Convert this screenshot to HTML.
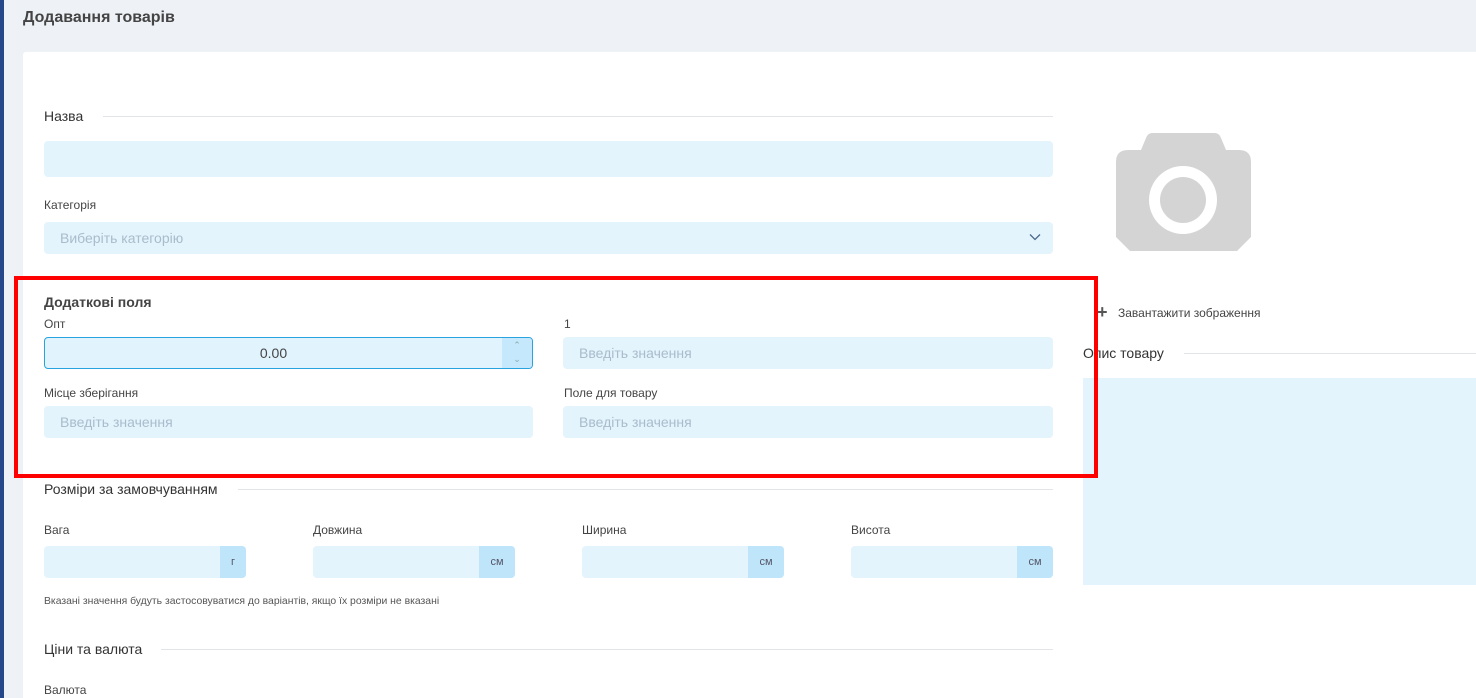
<!DOCTYPE html>
<html><head><meta charset="utf-8"><style>
*{box-sizing:border-box;margin:0;padding:0}
body{width:1476px;height:698px;overflow:hidden;background:#eef2f6;font-family:"Liberation Sans",sans-serif;position:relative;color:#333}
.a{position:absolute}
.lbl{font-size:12px;color:#444}
.inp{background:#e4f4fd;border-radius:4px}
.ph{font-size:14px;color:#a9bccb;padding-left:16px;line-height:32px}
.hr{height:1px;background:#e2e4e8}
.unit{position:absolute;right:0;top:0;bottom:0;width:26px;background:#bfe5fb;border-radius:0 4px 4px 0;font-size:11px;color:#556;text-align:center;line-height:32px}
.unit.w{width:36px}
</style></head><body>
<div class="a" style="left:0;top:0;width:4px;height:698px;background:#26478a"></div>
<div class="a" style="left:23px;top:9px;font-size:16px;font-weight:bold;color:#444">Додавання товарів</div>
<div class="a" style="left:23px;top:52px;width:1453px;height:646px;background:#fff;border-radius:3px 0 0 0"></div>

<div class="a" style="left:44px;top:108px;font-size:14px;color:#333">Назва</div>
<div class="a hr" style="left:103px;top:116px;width:950px"></div>
<div class="a inp" style="left:44px;top:141px;width:1009px;height:36px"></div>
<div class="a lbl" style="left:44px;top:198px">Категорія</div>
<div class="a inp ph" style="left:44px;top:222px;width:1009px;height:32px">Виберіть категорію</div>
<svg class="a" style="left:1029px;top:233px" width="12" height="8" viewBox="0 0 12 8"><path d="M1 1.5L6 6.5L11 1.5" fill="none" stroke="#4a6a8a" stroke-width="1.3"/></svg>

<div class="a" style="left:44px;top:294px;font-size:14px;font-weight:bold;color:#444">Додаткові поля</div>
<div class="a lbl" style="left:44px;top:317px">Опт</div>
<div class="a" style="left:44px;top:337px;width:489px;height:32px;background:#e1f3fd;border:1px solid #29a3e0;border-radius:4px">
 <div style="position:absolute;left:0;right:30px;text-align:center;line-height:30px;font-size:14px;color:#444">0.00</div>
 <div style="position:absolute;right:0;top:0;bottom:0;width:30px;background:#c5e8fc;border-radius:0 3px 3px 0;font-size:9px;color:#8aa;text-align:center;line-height:14px">⌃<br>⌄</div>
</div>
<div class="a lbl" style="left:564px;top:317px">1</div>
<div class="a inp ph" style="left:563px;top:337px;width:490px;height:32px">Введіть значення</div>
<div class="a lbl" style="left:44px;top:386px">Місце зберігання</div>
<div class="a inp ph" style="left:44px;top:406px;width:489px;height:32px">Введіть значення</div>
<div class="a lbl" style="left:564px;top:386px">Поле для товару</div>
<div class="a inp ph" style="left:563px;top:406px;width:490px;height:32px">Введіть значення</div>

<div class="a" style="left:44px;top:481px;font-size:14px">Розміри за замовчуванням</div>
<div class="a hr" style="left:238px;top:489px;width:815px"></div>
<div class="a lbl" style="left:44px;top:523px">Вага</div>
<div class="a inp" style="left:44px;top:546px;width:202px;height:32px"><div class="unit">г</div></div>
<div class="a lbl" style="left:313px;top:523px">Довжина</div>
<div class="a inp" style="left:313px;top:546px;width:202px;height:32px"><div class="unit w">см</div></div>
<div class="a lbl" style="left:582px;top:523px">Ширина</div>
<div class="a inp" style="left:582px;top:546px;width:202px;height:32px"><div class="unit w">см</div></div>
<div class="a lbl" style="left:851px;top:523px">Висота</div>
<div class="a inp" style="left:851px;top:546px;width:202px;height:32px"><div class="unit w">см</div></div>
<div class="a" style="left:44px;top:596px;font-size:10.4px;color:#555">Вказані значення будуть застосовуватися до варіантів, якщо їх розміри не вказані</div>

<div class="a" style="left:44px;top:641px;font-size:14px">Ціни та валюта</div>
<div class="a hr" style="left:161px;top:649px;width:892px"></div>
<div class="a lbl" style="left:44px;top:683px">Валюта</div>

<svg class="a" style="left:1116px;top:133px" width="135" height="118" viewBox="0 0 135 118">
<path d="M40 0H99Q103 0 105 5L110 17H123Q135 17 135 29V104L121 118H14L0 104V29Q0 17 12 17H25L30 5Q32 0 36 0Z" fill="#d4d4d4"/>
<circle cx="67" cy="67" r="34" fill="#fff"/><circle cx="67" cy="67" r="23" fill="#d4d4d4"/>
</svg>
<div class="a" style="left:1097px;top:302px;font-size:18px;font-weight:bold;color:#555">+</div>
<div class="a" style="left:1118px;top:306px;font-size:12px;color:#444">Завантажити зображення</div>
<div class="a" style="left:1083px;top:345px;font-size:14px">Опис товару</div>
<div class="a hr" style="left:1184px;top:353px;width:292px"></div>
<div class="a" style="left:1083px;top:378px;width:393px;height:207px;background:#e4f4fd"></div>

<div class="a" style="left:14px;top:276px;width:1084px;height:202px;border:4px solid #f00;z-index:5"></div>
</body></html>
